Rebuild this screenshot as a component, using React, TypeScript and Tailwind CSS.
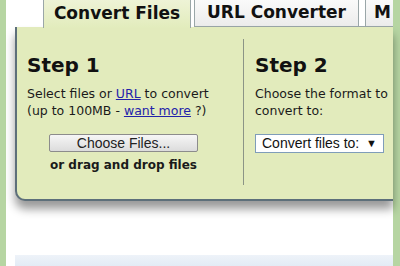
export default function App() {
  const body = { fontFamily: '"DejaVu Sans", Verdana, sans-serif' };
  const arial = { fontFamily: '"Liberation Sans", Arial, sans-serif' };
  return (
    <div className="w-[400px] h-[266px] bg-white flex overflow-hidden">
      <div className="w-[6px] h-full bg-[#b6d5a2]" />
      <div className="flex-1 flex flex-col pl-[9px]">
        {/* tabs */}
        <div className="flex h-[27px] items-stretch pl-[28px]" style={body}>
          <div className="w-[148px] border-l border-r border-[#9aa6a8] bg-gradient-to-b from-[#eef3d6] to-[#e2ecbc] flex items-center justify-center text-[17px] font-bold text-[#111] -mb-px z-10">
            Convert Files
          </div>
          <div className="w-[3px]" />
          <div className="w-[165px] border-l border-r border-b border-[#9aa6a8] bg-gradient-to-b from-[#fafafa] to-[#ececec] flex items-center justify-center text-[17px] font-bold text-[#111]">
            URL Converter
          </div>
          <div className="w-[6px] border-b border-[#9aa6a8]" />
          <div className="flex-1 border-l border-b border-[#9aa6a8] bg-gradient-to-b from-[#fafafa] to-[#ececec] flex items-center pl-[8px] text-[17px] font-bold text-[#111] overflow-hidden">
            M
          </div>
        </div>
        {/* panel */}
        <div className="h-[174px] bg-[#e2ebbc] border-l-2 border-b-2 border-[#5d6f7a] rounded-bl-[10px] flex shadow-[0_8px_10px_rgba(0,0,0,0.4)] relative z-0">
          <div className="w-[226px] pl-[10px] pt-[26px] flex flex-col" style={body}>
            <div className="text-[20px] font-bold text-[#111] leading-[24px]">Step 1</div>
            <div className="mt-[8px] text-[12.5px] leading-[17px] text-[#1a1a1a]">
              Select files or <span className="text-[#2222aa] underline">URL</span> to convert
              <br />
              (up to 100MB - <span className="text-[#2222aa] underline">want more</span> ?)
            </div>
            <div className="mt-[15px] ml-[22px] w-[149px] h-[18px] border border-[#8c8c8c] rounded-[2px] bg-gradient-to-b from-[#f6f6f6] to-[#dcdcdc] flex items-center justify-center text-[14px] text-[#222]" style={arial}>
              Choose Files...
            </div>
            <div className="mt-[4px] ml-[22px] w-[149px] text-center text-[12px] font-bold text-[#1a1a1a]" style={body}>
              or drag and drop files
            </div>
          </div>
          <div className="w-px bg-[#8b9486] mt-[12px] mb-[14px]" />
          <div className="flex-1 pl-[11px] pt-[26px] flex flex-col" style={body}>
            <div className="text-[20px] font-bold text-[#111] leading-[24px]">Step 2</div>
            <div className="mt-[8px] text-[12.5px] leading-[17px] text-[#1a1a1a]">
              Choose the format to
              <br />
              convert to:
            </div>
            <div className="mt-[15px] w-[129px] h-[19px] border border-[#7f9db9] bg-white flex items-center justify-between pl-[6px] pr-[6px] text-[14px] text-[#111]" style={arial}>
              <span>Convert files to:</span>
              <span className="text-[11px]">▼</span>
            </div>
          </div>
        </div>
        <div className="flex-1 flex flex-col justify-end">
          <div className="h-[11px] bg-gradient-to-b from-[#eef3f9] to-[#e3ebf5]" />
        </div>
      </div>
      <div className="w-[7px] h-full bg-[#b6d5a2]" />
    </div>
  );
}
